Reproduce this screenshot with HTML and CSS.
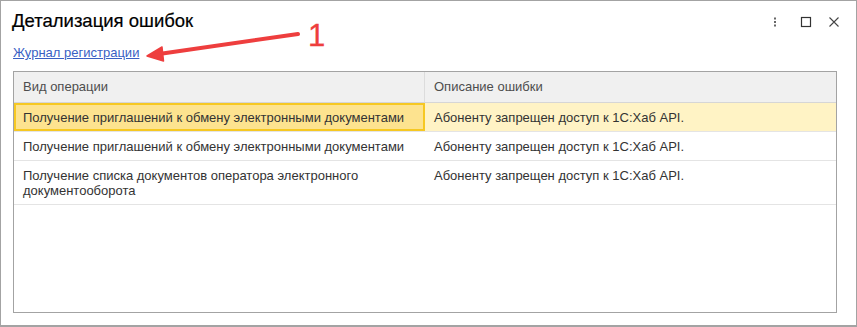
FILE: index.html
```html
<!DOCTYPE html>
<html>

<head>
  <meta charset="UTF-8">
  <link rel="stylesheet" href="styles.css">
  <title>Детализация ошибок</title>
</head>

<body>
<div class="window">
  <div class="title-bar">
    <h1 class="title">Детализация ошибок</h1>
    <div class="controls">
      <svg class="ctl ctl-more" width="12" height="14" viewBox="0 0 12 14">
        <rect x="5" y="2.5" width="2" height="2" fill="#666"/>
        <rect x="5" y="6" width="2" height="2" fill="#666"/>
        <rect x="5" y="9.5" width="2" height="2" fill="#666"/>
      </svg>
      <svg class="ctl ctl-max" width="14" height="14" viewBox="0 0 14 14">
        <rect x="2.5" y="2.5" width="9" height="9" fill="none" stroke="#333" stroke-width="1.2"/>
      </svg>
      <svg class="ctl" width="14" height="14" viewBox="0 0 14 14">
        <path d="M2.5 2.5 L11.5 11.5 M11.5 2.5 L2.5 11.5" stroke="#444" stroke-width="1.1"/>
      </svg>
    </div>
  </div>

  <a class="log-link" href="#">Журнал регистрации</a>

  <div class="grid">
    <div class="grid-row grid-head">
      <div class="cell col-op">Вид операции</div>
      <div class="cell col-desc">Описание ошибки</div>
    </div>
    <div class="grid-row selected">
      <div class="cell col-op current">Получение приглашений к обмену электронными документами</div>
      <div class="cell col-desc">Абоненту запрещен доступ к 1С:Хаб API.</div>
    </div>
    <div class="grid-row">
      <div class="cell col-op">Получение приглашений к обмену электронными документами</div>
      <div class="cell col-desc">Абоненту запрещен доступ к 1С:Хаб API.</div>
    </div>
    <div class="grid-row">
      <div class="cell col-op">Получение списка документов оператора электронного документооборота</div>
      <div class="cell col-desc">Абоненту запрещен доступ к 1С:Хаб API.</div>
    </div>
  </div>

  <div class="note">
    <svg width="160" height="44" viewBox="0 0 160 44">
      <path d="M153 13 L14 33" stroke="#ee3e3e" stroke-width="4" stroke-linecap="round"/>
      <path d="M2 35 L17 26 L18.5 40 Z" fill="#ee3e3e" stroke="#ee3e3e" stroke-width="1.5" stroke-linejoin="round"/>
    </svg>
    <span class="note-num">1</span>
  </div>
</div>
</body>
</html>
```

FILE: styles.css
```css
body {
    margin: 0;
    padding: 0;
    font-family: 'Liberation Sans', Arial, sans-serif;
    background: #fff;
}

.window {
    position: relative;
    width: 857px;
    height: 327px;
    box-sizing: border-box;
    border: 1px solid #a3a3a3;
    border-bottom-width: 2px;
    background: #fff;
}

.title-bar {
    display: flex;
    justify-content: space-between;
    align-items: flex-start;
    height: 44px;
}

.title {
    margin: 9px 0 0 11px;
    font-size: 18.5px;
    font-weight: normal;
    color: #000;
    line-height: 22px;
    -webkit-text-stroke: 0.2px #000;
}

.controls {
    display: flex;
    margin: 14px 15px 0 0;
}

.ctl {
    display: block;
}

.ctl-more {
    margin-right: 18px;
}

.ctl-max {
    margin-right: 14px;
}

.log-link {
    display: block;
    width: fit-content;
    margin-left: 12px;
    font-size: 13px;
    line-height: 16px;
    color: #3a5fc4;
    text-decoration: underline;
}

.grid {
    margin: 10px 19px 0 12px;
    height: 242px;
    box-sizing: border-box;
    border: 1px solid #a3a3a3;
    font-size: 13px;
    color: #333;
}

.grid-row {
    display: flex;
    border-bottom: 1px solid #e4e4e4;
}

.cell {
    padding: 7px 9px 6px;
    line-height: 15px;
    box-sizing: border-box;
}

.col-op {
    width: 411px;
}

.col-desc {
    flex: 1;
}

.grid-head {
    background: #f0f0f0;
    color: #4d4d4d;
    border-bottom: 1px solid #d6d6d6;
}

.grid-head .cell {
    padding: 7px 9px 8px;
}

.grid-head .col-op {
    border-right: 1px solid #dcdcdc;
}

.grid-row.selected {
    background: #fff3c5;
}

.cell.current {
    background: #fde38f;
    border: 2px solid #f6c822;
    padding: 5px 7px 4px;
}

.note {
    position: absolute;
    left: 144px;
    top: 20px;
    display: flex;
    align-items: flex-start;
}

.note-num {
    margin: 0 0 0 3px;
    font-size: 31px;
    line-height: 30px;
    color: #ee3e3e;
    -webkit-text-stroke: 0.3px #ee3e3e;
}
```
